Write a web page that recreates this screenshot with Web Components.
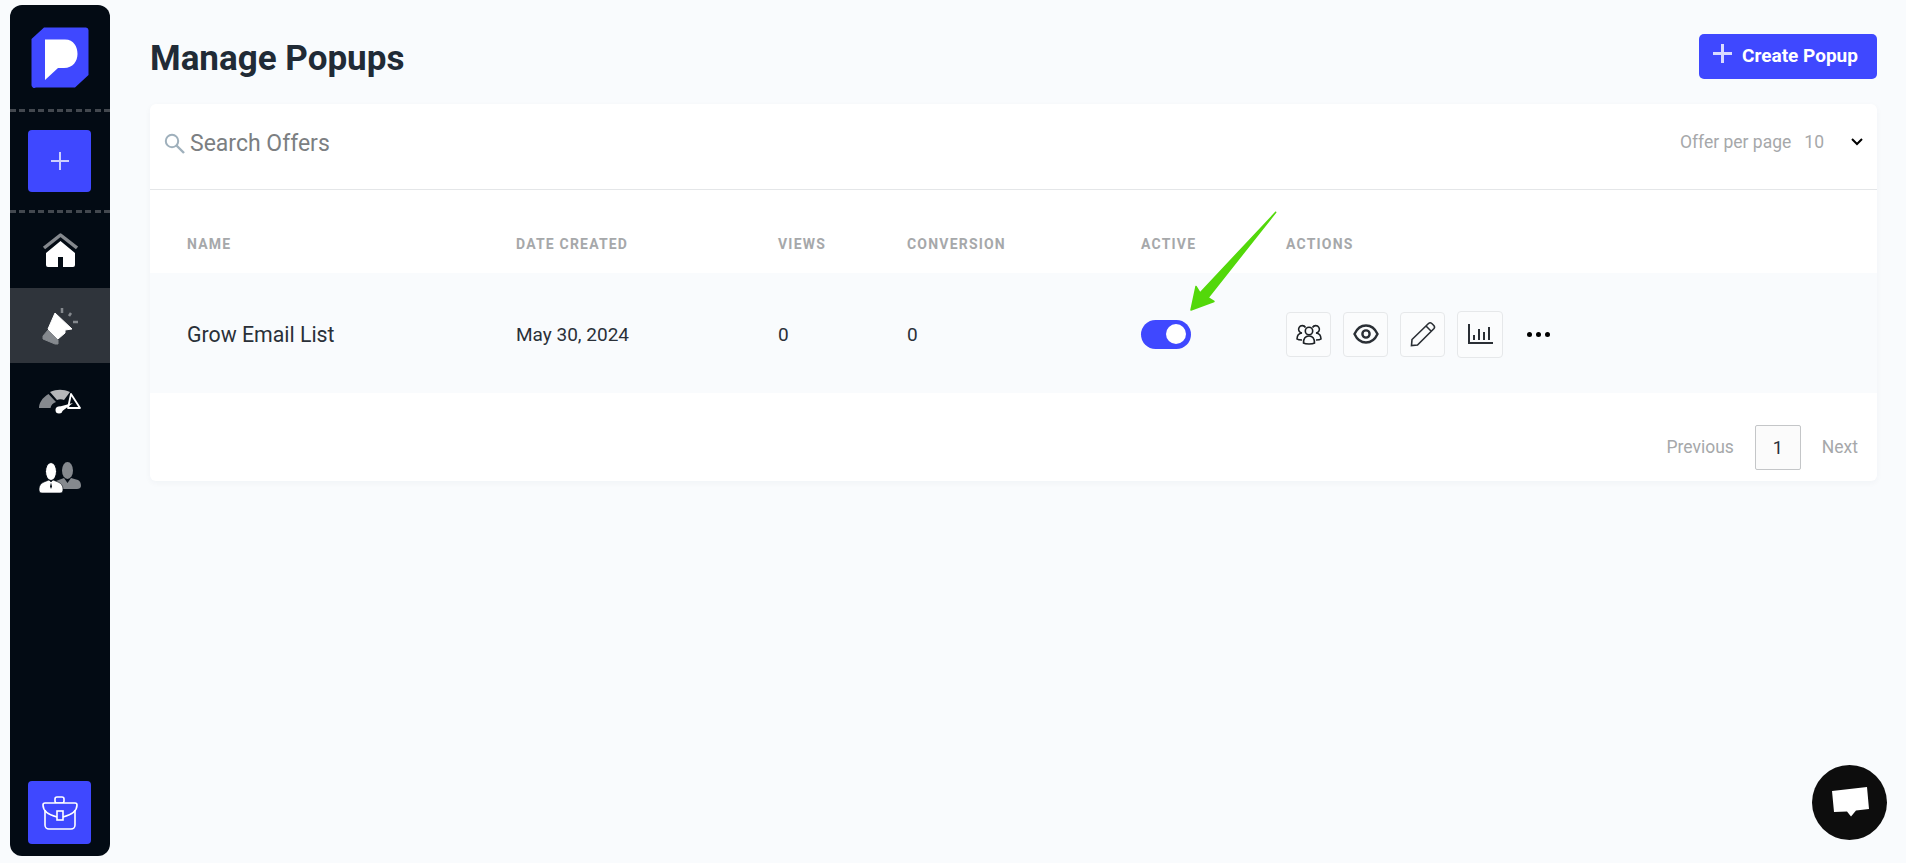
<!DOCTYPE html>
<html>
<head>
<meta charset="utf-8">
<title>Manage Popups</title>
<style>
  html, body { margin: 0; height: 100%; }
  body {
    background: #f9fbfd;
    font-family: Roboto, "Liberation Sans", sans-serif;
    color: #212b36;
    display: flex;
    overflow: hidden;
  }
</style>
</head>
<body>
<app-sidebar></app-sidebar>
<popup-page></popup-page>
<chat-bubble></chat-bubble>

<script>
const ICONS = {
  logo: `<svg width="58" height="61" viewBox="0 0 58 61"><path d="M13 .5H55a3 3 0 0 1 2.500 2.500V48L44 60.500H5a3 3 0 0 1-4.500-3V12z" fill="#3f48ff"/><path d="M14 12.500H34C43 12.500 46.500 20 46.500 27C46.500 34 42 41 33 41H27L14 53z" fill="#fff"/></svg>`,
  plus: `<svg width="20" height="20" viewBox="0 0 20 20"><path d="M10 1v18M1 10h18" stroke="#ccd0ff" stroke-width="2"/></svg>`,
  home: `<svg width="36" height="36" viewBox="0 0 36 36"><path d="M2 15L18.500 2 35 15" fill="none" stroke="#85898e" stroke-width="3.500" stroke-linejoin="round"/><path d="M18.500 8L33 20v12a2 2 0 0 1-2 2H21V24h-5v10H6a2 2 0 0 1-2-2V20z" fill="#fff"/></svg>`,
  horn: `<svg width="38" height="40" viewBox="0 0 38 40"><path d="M14 7L31 23 24 24 24 27 17 33 7 23z" fill="#fff" stroke="#fff" stroke-linejoin="round"/><path d="M2 30L7 24 17 34 17 38 14 38 2 33z" fill="#85898e" stroke="#85898e" stroke-linejoin="round"/><path d="M21 2v5M30 7l-2 3M32 16h5" stroke="#85898e" stroke-width="2.500"/></svg>`,
  gauge: `<svg width="42" height="26" viewBox="0 0 42 26"><path d="M0 20c0-5 3-10 9.500-14l7.500 8c-3 1-5 3-5.500 6z" fill="#85898e"/><path d="M11 4c7-3 13-3 20 0l-6 8c-2-1-5-1-7 0z" fill="#b5b7ba"/><path d="M32 6l9 14H29z" fill="none" stroke="#fff" stroke-width="1.800" stroke-linejoin="round"/><path d="M19 19l15-4-12 9z" fill="#fff"/><circle cx="20" cy="22" r="3.500" fill="#fff"/></svg>`,
  team: `<svg width="44" height="32" viewBox="0 0 44 32"><ellipse cx="29.500" cy="8.500" rx="5.500" ry="8.500" fill="#85898e"/><path d="M18 19l8-3 3.500 5 3.500-5 7 2c2 1 3 3 3 6 0 2-2 3-4 3H24z" fill="#85898e"/><ellipse cx="13" cy="9.500" rx="5.500" ry="9" fill="#fff" stroke="#030b14" stroke-width="1"/><path d="M1 27c0-3 2-6 5-7l5-2 2 2 2-2 5 2c3 1 5 4 5 7 0 3-1 4-3 4H4c-2 0-3-1-3-4z" fill="#fff" stroke="#030b14" stroke-width=".6"/><path d="M13 20.500l-1 4 1 2.500 1-2.500z" fill="#030b14"/></svg>`,
  case: `<svg width="36" height="34" viewBox="0 0 36 34"><g fill="none" stroke="#fff" stroke-width="1.600"><rect x="13" y="1" width="9" height="6" rx="2"/><path d="M3 7h30a2 2 0 0 1 2 2c0 6-6 10-14 12h-6C7 19 1 15 1 9a2 2 0 0 1 2-2z" fill="#3f48ff"/><path d="M3 14v15a4 4 0 0 0 4 4h22a4 4 0 0 0 4-4V14"/><rect x="15" y="15" width="6" height="9" fill="#3f48ff"/></g></svg>`,
  search: `<svg width="21" height="21" viewBox="0 0 21 21"><circle cx="8" cy="8" r="6.200" fill="none" stroke="#9fb0bc" stroke-width="2"/><path d="M12.500 12.500L20 20" stroke="#9fb0bc" stroke-width="2.400"/></svg>`,
  chevron: `<svg width="12" height="8" viewBox="0 0 12 8"><path d="M1 1l5 5 5-5" fill="none" stroke="#000" stroke-width="2"/></svg>`,
  users: `<svg width="26" height="22" viewBox="0 0 26 22"><g fill="none" stroke="#1c2024" stroke-width="1.600"><circle cx="13" cy="8" r="3.700"/><path d="M7.500 20c0-5 2-7 5.500-7s5.500 2 5.500 7c-2 1.300-9 1.300-11 0z"/><path d="M9.500 4.500A3.700 3.700 0 1 0 6 10C2.500 10.500 1 13 1 16c1 .8 3 1 5 1"/><path d="M16.500 4.500A3.700 3.700 0 1 1 20 10c3.500.5 5 3 5 6-1 .8-3 1-5 1"/></g></svg>`,
  eye: `<svg width="26" height="20" viewBox="0 0 26 20"><path d="M1.500 10C4 4.500 8 1.500 13 1.500S22 4.500 24.500 10C22 15.500 18 18.500 13 18.500S4 15.500 1.500 10z" fill="none" stroke="#2a2f35" stroke-width="2.400"/><circle cx="13" cy="10" r="3.600" fill="none" stroke="#2a2f35" stroke-width="2.400"/></svg>`,
  pencil: `<svg width="26" height="26" viewBox="0 0 26 26"><path d="M2 18.500L18.500 2.500a2.500 2.500 0 0 1 3.300 0l2 2a2.500 2.500 0 0 1 0 3.300L7.500 24 1.500 24.500zM16 5l5.500 5.500" fill="none" stroke="#2a2f35" stroke-width="1.600"/></svg>`,
  chart: `<svg width="25" height="20" viewBox="0 0 25 20"><path d="M1 0v19h24" fill="none" stroke="#2a2f35" stroke-width="2"/><path d="M6 11v5M11 5v11M16 8v8M21 3v13" stroke="#2a2f35" stroke-width="2"/></svg>`,
  chat: `<svg width="38" height="32" viewBox="0 0 38 32"><path d="M1 4L36 0l2 22-13 1.500-5 6-4-5L3 25z" fill="#fff"/></svg>`
};

class SideItem extends HTMLElement {
  connectedCallback() {
    this.attachShadow({ mode: 'open' });
    this.shadowRoot.innerHTML = `
      <style>
        :host {
          display: flex;
          align-items: center;
          justify-content: center;
          height: var(--h, 75px);
        }
        :host([active]) { background: #2f343b; }
      </style>
      ${ICONS[this.getAttribute('icon')]}
    `;
  }
}
customElements.define('side-item', SideItem);

class SideSquare extends HTMLElement {
  connectedCallback() {
    this.attachShadow({ mode: 'open' });
    this.shadowRoot.innerHTML = `
      <style>
        :host {
          display: flex;
          align-items: center;
          justify-content: center;
          width: 63px;
          height: var(--h, 63px);
          background: #3f48ff;
          border-radius: 4px;
        }
      </style>
      ${ICONS[this.getAttribute('icon')]}
    `;
  }
}
customElements.define('side-square', SideSquare);

class AppSidebar extends HTMLElement {
  connectedCallback() {
    this.attachShadow({ mode: 'open' });
    this.shadowRoot.innerHTML = `
      <style>
        :host {
          display: flex;
          flex-direction: column;
          flex: none;
          box-sizing: border-box;
          width: 100px;
          height: 851px;
          margin: 5px 0 0 10px;
          background: #030b14;
          border-radius: 12px;
        }
        .logo { display: flex; justify-content: center; padding-top: 22px; height: 104px; box-sizing: border-box; }
        .dash {
          height: 3px;
          background: repeating-linear-gradient(90deg, #43484f 0 6px, transparent 6px 9.400px);
        }
        .square { display: flex; justify-content: center; padding: 18px 1px 18px 0; }
        .foot { margin-top: auto; display: flex; justify-content: center; padding: 0 1px 12px 0; }
      </style>
      <div class="logo">${ICONS.logo}</div>
      <div class="dash"></div>
      <div class="square"><side-square icon="plus" style="--h:62px"></side-square></div>
      <div class="dash"></div>
      <div class="nav">
        <side-item icon="home"></side-item>
        <side-item icon="horn" active></side-item>
        <side-item icon="gauge" style="--h:75px"></side-item>
        <side-item icon="team" style="--h:79px"></side-item>
      </div>
      <div class="foot"><side-square icon="case"></side-square></div>
    `;
  }
}
customElements.define('app-sidebar', AppSidebar);

class CreateButton extends HTMLElement {
  connectedCallback() {
    this.attachShadow({ mode: 'open' });
    this.shadowRoot.innerHTML = `
      <style>
        :host {
          display: inline-flex;
          align-items: center;
          justify-content: center;
          gap: 10px;
          width: 178px;
          height: 45px;
          padding: 0 5px 2px 0;
          box-sizing: border-box;
          background: #3f48ff;
          border-radius: 5px;
          color: #fff;
          font-weight: 700;
          font-size: 19px;
        }
        svg { margin-top: -4px; }
      </style>
      <svg width="19" height="19" viewBox="0 0 19 19"><path d="M9.500 0v19M0 9.500h19" stroke="#d9dbff" stroke-width="3"/></svg>
      <slot></slot>
    `;
  }
}
customElements.define('create-button', CreateButton);

class ActionButton extends HTMLElement {
  connectedCallback() {
    this.attachShadow({ mode: 'open' });
    this.shadowRoot.innerHTML = `
      <style>
        :host {
          display: flex;
          align-items: center;
          justify-content: center;
          box-sizing: border-box;
          width: 45px;
          height: 45px;
          border: 1px solid #e6e8ea;
          border-radius: 4px;
          background: #fbfcfd;
        }
        :host([wide]) { width: 46px; height: 47px; }
      </style>
      ${ICONS[this.getAttribute('icon')]}
    `;
  }
}
customElements.define('action-button', ActionButton);

class ToggleSwitch extends HTMLElement {
  connectedCallback() {
    this.attachShadow({ mode: 'open' });
    this.shadowRoot.innerHTML = `
      <style>
        :host {
          display: flex;
          align-items: center;
          justify-content: flex-end;
          box-sizing: border-box;
          width: 50px;
          height: 29px;
          padding-right: 5px;
          background: #3f48ff;
          border-radius: 15px;
        }
        i { display: block; width: 20px; height: 20px; border-radius: 50%; background: #fff; }
      </style>
      <i></i>
    `;
  }
}
customElements.define('toggle-switch', ToggleSwitch);

class OfferTable extends HTMLElement {
  connectedCallback() {
    this.attachShadow({ mode: 'open' });
    this.shadowRoot.innerHTML = `
      <style>
        :host {
          display: block;
          position: relative;
          background: #fff;
          border-radius: 6px;
          box-shadow: 0 2px 6px rgba(30, 50, 80, .04);
        }
        .search {
          display: flex;
          align-items: center;
          height: 86px;
          box-sizing: border-box;
          padding: 0 14px 6px;
          border-bottom: 1px solid #e4e6e8;
        }
        .search svg:first-child { margin-right: 5px; }
        .query { font-size: 23px; color: #7c7f82; }
        .per-page { margin: 0 0 4px auto; display: flex; align-items: center; font-size: 17.500px; color: #a6a8aa; }
        .per-page b { font-weight: 400; margin-left: 13px; margin-right: 27px; }
        .row {
          display: grid;
          box-sizing: border-box;
          grid-template-columns: 329px 262px 129px 234px 145px 1fr;
          padding-left: 37px;
          align-items: center;
        }
        .head {
          height: 83px;
          padding-top: 24px;
          font-size: 14px;
          font-weight: 700;
          letter-spacing: 1.200px;
          color: #a6a8aa;
        }
        .body {
          height: 120px;
          padding-top: 2px;
          background: #f9fbfd;
          font-size: 19px;
          color: #2a3038;
        }
        .name { font-size: 21.300px; }
        .actions { display: flex; align-items: center; gap: 12px; }
        .dots { display: flex; gap: 4px; margin-left: 12px; }
        .dots i { display: block; width: 5px; height: 5px; border-radius: 50%; background: #000; }
        .pager {
          display: flex;
          align-items: center;
          justify-content: flex-end;
          box-sizing: border-box;
          height: 88px;
          padding: 20px 19px 0 0;
          font-size: 17.500px;
          color: #a6a8aa;
        }
        .page {
          display: flex;
          align-items: center;
          justify-content: center;
          box-sizing: border-box;
          width: 46px;
          height: 45px;
          margin: 0 21px;
          border: 1px solid #c4c6c8;
          border-radius: 2px;
          color: #2a3038;
          font-size: 18px;
          background: #fbfbfb;
        }
        .arrow { position: absolute; left: 1028px; top: 100px; }
      </style>
      <div class="search">
        ${ICONS.search}
        <span class="query">Search Offers</span>
        <span class="per-page">Offer per page <b>10</b>${ICONS.chevron}</span>
      </div>
      <div class="row head">
        <span>NAME</span><span>DATE CREATED</span><span>VIEWS</span><span>CONVERSION</span><span>ACTIVE</span><span>ACTIONS</span>
      </div>
      <div class="row body">
        <span class="name">Grow Email List</span><span>May 30, 2024</span><span>0</span><span>0</span>
        <span><toggle-switch></toggle-switch></span>
        <span class="actions">
          <action-button icon="users"></action-button>
          <action-button icon="eye"></action-button>
          <action-button icon="pencil"></action-button>
          <action-button icon="chart" wide></action-button>
          <span class="dots"><i></i><i></i><i></i></span>
        </span>
      </div>
      <div class="pager"><span>Previous</span><span class="page">1</span><span>Next</span></div>
      <!-- annotation arrow drawn over the table -->
      <svg class="arrow" width="100" height="112" viewBox="0 0 100 112"><path d="M97.700 8.300L22 89 18 82.500 13 106 36 97.500 30 93.700z" fill="#53d80a" stroke="#53d80a" stroke-width="1.500" stroke-linejoin="round"/></svg>
    `;
  }
}
customElements.define('offer-table', OfferTable);

class PopupPage extends HTMLElement {
  connectedCallback() {
    this.attachShadow({ mode: 'open' });
    this.shadowRoot.innerHTML = `
      <style>
        :host {
          display: block;
          flex: 1;
          min-width: 0;
          padding: 34px 29px 0 40px;
        }
        header {
          display: flex;
          align-items: flex-start;
          justify-content: space-between;
          height: 70px;
        }
        h1 { margin: 0; font-size: 35px; line-height: 50px; font-weight: 700; color: #212b36; }
      </style>
      <header>
        <h1>Manage Popups</h1>
        <create-button>Create Popup</create-button>
      </header>
      <offer-table></offer-table>
    `;
  }
}
customElements.define('popup-page', PopupPage);

class ChatBubble extends HTMLElement {
  connectedCallback() {
    this.attachShadow({ mode: 'open' });
    this.shadowRoot.innerHTML = `
      <style>
        :host {
          position: fixed;
          right: 19px;
          bottom: 23px;
          display: flex;
          align-items: center;
          justify-content: center;
          width: 75px;
          height: 75px;
          border-radius: 50%;
          background: #0d0d0d;
        }
      </style>
      ${ICONS.chat}
    `;
  }
}
customElements.define('chat-bubble', ChatBubble);
</script>
</body>
</html>
